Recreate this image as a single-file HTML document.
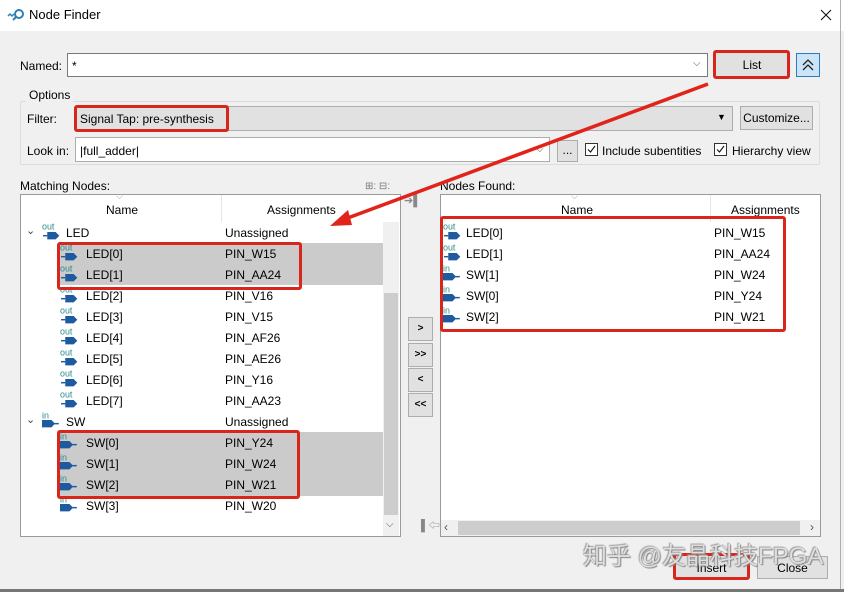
<!DOCTYPE html>
<html><head><meta charset="utf-8">
<style>
*{box-sizing:border-box;margin:0;padding:0}
body{width:844px;height:592px;background:#f0f0f0;font-family:"Liberation Sans","Noto Sans CJK SC",sans-serif;font-size:12px;color:#000;position:relative;overflow:hidden}
.a{position:absolute}
.t{position:absolute;white-space:nowrap;line-height:14px}
.box{position:absolute;background:#fff;border:1px solid #7a7a7a}
.btn{position:absolute;background:#e1e1e1;border:1px solid #adadad;text-align:center}
.red{position:absolute;border:3px solid #d9261c;border-radius:3px}
.sel{position:absolute;background:#cbcbcb}
.ic{position:absolute;width:21px;height:19px}
</style></head><body>
<div class="a" style="left:0;top:0;width:844px;height:31px;background:#fff"></div>
<div class="a" style="left:840px;top:0;width:1px;height:592px;background:#b0b0b0"></div>
<div class="a" style="left:0;top:589px;width:844px;height:3px;background:#777"></div>
<svg class="a" style="left:7px;top:9px" width="18" height="12" viewBox="0 0 18 12"><path d="M1 7 L3 5 L5 7 L7 5" stroke="#2d7fb8" stroke-width="1.5" fill="none"/><circle cx="12" cy="5" r="4" stroke="#2d7fb8" stroke-width="2" fill="none"/><path d="M9 8 L6 11" stroke="#2d7fb8" stroke-width="2"/></svg>
<div class="t" style="left:29px;top:8px;font-size:13px">Node Finder</div>
<svg class="a" style="left:820px;top:9px" width="12" height="12" viewBox="0 0 12 12"><path d="M1 1 L11 11 M11 1 L1 11" stroke="#111" stroke-width="1.1"/></svg>

<div class="t" style="left:20px;top:59px">Named:</div>
<div class="box" style="left:67px;top:53px;width:641px;height:24px"></div>
<div class="t" style="left:72px;top:59px">*</div>
<div class="t" style="left:693px;top:57px;color:#555;font-size:10px">⌵</div>
<div class="btn" style="left:715px;top:52px;width:74px;height:25px;border-color:#3060b0;line-height:25px">List</div>
<div class="red" style="left:713px;top:50px;width:77px;height:29px"></div>
<div class="a" style="left:796px;top:53px;width:24px;height:24px;background:#cce4f7;border:1px solid #2b7bc0"></div>
<svg class="a" style="left:799px;top:56px" width="18" height="18" viewBox="0 0 18 18"><path d="M4 9 L9 4 L14 9 M4 14 L9 9 L14 14" stroke="#222" stroke-width="1.3" fill="none"/></svg>

<div class="a" style="left:20px;top:101px;width:800px;height:64px;border:1px solid #dcdcdc;border-radius:2px"></div>
<div class="t" style="left:26px;top:88px;background:#f0f0f0;padding:0 3px">Options</div>
<div class="t" style="left:27px;top:112px">Filter:</div>
<div class="a" style="left:75px;top:106px;width:658px;height:25px;background:#e1e1e1;border:1px solid #adadad"></div>
<div class="t" style="left:80px;top:112px">Signal Tap: pre-synthesis</div>
<div class="t" style="left:717px;top:110px;font-size:9px">▼</div>
<div class="red" style="left:74px;top:105px;width:155px;height:27px"></div>
<div class="btn" style="left:740px;top:106px;width:73px;height:24px;line-height:23px">Customize...</div>
<div class="t" style="left:27px;top:144px">Look in:</div>
<div class="box" style="left:75px;top:137px;width:475px;height:25px;border-color:#adadad"></div>
<div class="t" style="left:80px;top:144px">|full_adder|</div>
<div class="t" style="left:536px;top:143px;color:#555;font-size:10px">⌵</div>
<div class="btn" style="left:557px;top:140px;width:21px;height:22px;line-height:18px">...</div>
<div class="a" style="left:585px;top:143px;width:13px;height:13px;background:#fff;border:1px solid #333"></div>
<svg class="a" style="left:586px;top:144px" width="11" height="11" viewBox="0 0 11 11"><path d="M2 5.5 L4.5 8 L9 2" stroke="#111" stroke-width="1.1" fill="none"/></svg>
<div class="t" style="left:602px;top:144px">Include subentities</div>
<div class="a" style="left:714px;top:143px;width:13px;height:13px;background:#fff;border:1px solid #333"></div>
<svg class="a" style="left:715px;top:144px" width="11" height="11" viewBox="0 0 11 11"><path d="M2 5.5 L4.5 8 L9 2" stroke="#111" stroke-width="1.1" fill="none"/></svg>
<div class="t" style="left:732px;top:144px">Hierarchy view</div>

<div class="t" style="left:20px;top:179px">Matching Nodes:</div>
<div class="t" style="left:365px;top:180px;color:#777;font-size:10px">⊞: ⊟:</div>
<div class="t" style="left:440px;top:179px">Nodes Found:</div>

<div class="box" style="left:20px;top:194px;width:381px;height:343px;border-color:#9a9a9a"></div>
<div class="a" style="left:221px;top:195px;width:1px;height:27px;background:#e5e5e5"></div>
<div class="t" style="left:116px;top:189px;color:#999;font-size:9px">⌵</div>
<div class="t" style="left:106px;top:203px">Name</div>
<div class="t" style="left:267px;top:203px">Assignments</div>
<div class="a" style="left:383px;top:222px;width:16px;height:314px;background:#f0f0f0"></div>
<div class="a" style="left:384px;top:293px;width:14px;height:222px;background:#cdcdcd"></div>
<div class="t" style="left:386px;top:518px;font-size:10px;color:#555">⌵</div>
<div class="sel" style="left:58px;top:243px;width:325px;height:42px"></div>
<div class="sel" style="left:58px;top:432px;width:325px;height:64px"></div>

<div class="box" style="left:440px;top:194px;width:381px;height:343px;border-color:#9a9a9a"></div>
<div class="a" style="left:710px;top:195px;width:1px;height:27px;background:#e5e5e5"></div>
<div class="t" style="left:571px;top:189px;color:#999;font-size:9px">⌵</div>
<div class="t" style="left:561px;top:203px">Name</div>
<div class="t" style="left:731px;top:203px">Assignments</div>
<div class="a" style="left:441px;top:520px;width:379px;height:16px;background:#f0f0f0"></div>
<div class="a" style="left:458px;top:521px;width:342px;height:14px;background:#cdcdcd"></div>
<div class="t" style="left:444px;top:520px;font-size:12px;color:#555">‹</div>
<div class="t" style="left:810px;top:520px;font-size:12px;color:#555">›</div>

<div class="t" style="left:404px;top:194px;color:#888;font-size:11px">➔▌</div>
<div class="btn" style="left:408px;top:317px;width:25px;height:24px;line-height:22px;font-size:10px;font-weight:bold">&gt;</div>
<div class="btn" style="left:408px;top:343px;width:25px;height:24px;line-height:22px;font-size:10px;font-weight:bold">&gt;&gt;</div>
<div class="btn" style="left:408px;top:368px;width:25px;height:24px;line-height:22px;font-size:10px;font-weight:bold">&lt;</div>
<div class="btn" style="left:408px;top:393px;width:25px;height:24px;line-height:22px;font-size:10px;font-weight:bold">&lt;&lt;</div>
<div class="t" style="left:421px;top:519px;color:#888;font-size:11px">▌⇦</div>

<div id="rows"></div>

<div class="red" style="left:57px;top:242px;width:245px;height:48px"></div>
<div class="red" style="left:57px;top:430px;width:243px;height:69px"></div>
<div class="red" style="left:440px;top:216px;width:346px;height:116px"></div>

<div class="btn" style="left:675px;top:555px;width:73px;height:24px;line-height:24px">Insert</div>
<div class="red" style="left:673px;top:553px;width:77px;height:27px"></div>
<div class="btn" style="left:757px;top:556px;width:71px;height:23px;line-height:22px">Close</div>
<div class="t" style="left:583px;top:544px;font-size:24px;line-height:26px;color:rgba(255,255,255,.75);text-shadow:0 0 1px #777,1px 1px 1px #888,-1px -1px 1px #aaa">知乎 @友晶科技FPGA</div>

<svg class="a" style="left:0;top:0" width="844" height="592"><line x1="708" y1="84" x2="345" y2="219" stroke="#e2231a" stroke-width="3.5"/><polygon points="330,226 348,210 352,225" fill="#e2231a"/></svg>

<script>
var L=[["LED","Unassigned",45,233,1,1],["LED[0]","PIN_W15",63,254,1],["LED[1]","PIN_AA24",63,275,1],["LED[2]","PIN_V16",63,296,1],["LED[3]","PIN_V15",63,317,1],["LED[4]","PIN_AF26",63,338,1],["LED[5]","PIN_AE26",63,359,1],["LED[6]","PIN_Y16",63,380,1],["LED[7]","PIN_AA23",63,401,1],["SW","Unassigned",45,422,0,1],["SW[0]","PIN_Y24",63,443,0],["SW[1]","PIN_W24",63,464,0],["SW[2]","PIN_W21",63,485,0],["SW[3]","PIN_W20",63,506,0]];
var R=[["LED[0]","PIN_W15",1],["LED[1]","PIN_AA24",1],["SW[1]","PIN_W24",0],["SW[0]","PIN_Y24",0],["SW[2]","PIN_W21",0]];
function icon(x,y,out){
 if(out)return '<svg class="ic" style="left:'+x+'px;top:'+(y-11)+'px" viewBox="0 0 20 18"><text x="0" y="7" font-size="8.5" fill="#2a8c8c" font-family="Liberation Sans">out</text><path d="M1 13 H5" stroke="#1e5aa0" stroke-width="1.4"/><path d="M5 9.5 H13 L16.5 13 L13 16.5 H5 Z" fill="#1e5aa0"/></svg>';
 return '<svg class="ic" style="left:'+x+'px;top:'+(y-11)+'px" viewBox="0 0 20 18"><text x="0" y="7" font-size="8.5" fill="#2a8c8c" font-family="Liberation Sans">in</text><path d="M0 8.5 H9 L12.5 12 L9 15.5 H0 Z" fill="#1e5aa0"/><path d="M12 12 H16" stroke="#1e5aa0" stroke-width="1.4"/></svg>';}
var h='';
L.forEach(function(r){
 var lx=r[2];
 if(r[5]){h+='<div class="t" style="left:26px;top:'+(r[3]-9)+'px;font-size:11px;color:#444">⌄</div>';}
 h+=icon(lx-3,r[3],r[4]);
 h+='<div class="t" style="left:'+(r[5]?66:86)+'px;top:'+(r[3]-7)+'px">'+r[0]+'</div>';
 h+='<div class="t" style="left:225px;top:'+(r[3]-7)+'px">'+r[1]+'</div>';});
R.forEach(function(r,i){var y=233+21*i;
 h+=icon(443,y,r[2]);
 h+='<div class="t" style="left:466px;top:'+(y-7)+'px">'+r[0]+'</div>';
 h+='<div class="t" style="left:714px;top:'+(y-7)+'px">'+r[1]+'</div>';});
document.getElementById('rows').innerHTML=h;
</script>
</body></html>
